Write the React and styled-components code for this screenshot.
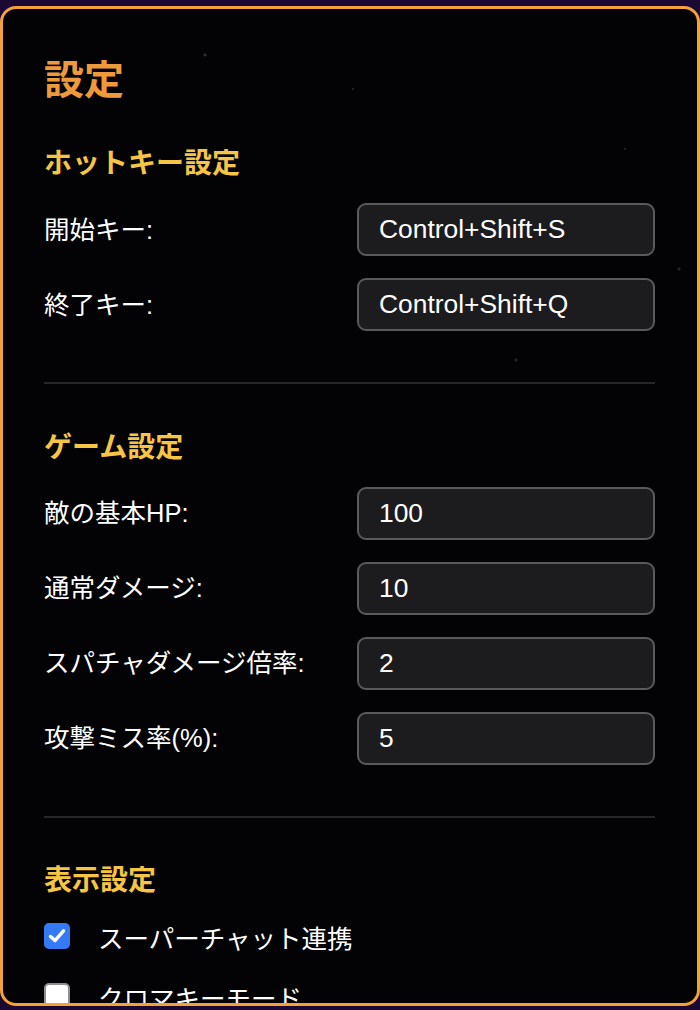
import React from "react";
import styled, { createGlobalStyle } from "styled-components";

const GlobalStyle = createGlobalStyle`
  html, body {
    margin: 0;
    padding: 0;
    background: #1b0833;
  }
  body {
    font-family: "Liberation Sans", "Noto Sans CJK JP", sans-serif;
    color: #fff;
  }
  * { box-sizing: border-box; }
`;

const Page = styled.div`
  padding-top: 6px;
  width: 700px;
`;

const Panel = styled.div`
  width: 700px;
  height: 1000px;
  border: 3px solid #f3a23b;
  border-radius: 16px;
  overflow: hidden;
  background-color: #030305;
  background-image:
    radial-gradient(circle at 202px 46px, #2c2c34 0 1.3px, transparent 1.8px),
    radial-gradient(circle at 350px 80px, #202026 0 1px, transparent 1.5px),
    radial-gradient(circle at 676px 260px, #26262c 0 1.3px, transparent 1.8px),
    radial-gradient(circle at 513px 351px, #26262c 0 1.3px, transparent 1.8px),
    radial-gradient(circle at 622px 140px, #1c1c22 0 1px, transparent 1.5px);
  padding: 46.5px 42px 0 41px;
`;

const Title = styled.h2`
  margin: 0 0 43.5px;
  font-size: 40px;
  line-height: 48px;
  font-weight: 700;
  color: #ee9a3c;
`;

const SectionTitle = styled.h3`
  margin: 0 0 22px;
  font-size: 28px;
  line-height: 34px;
  font-weight: 700;
  color: #f5c543;
`;

const FieldList = styled.div`
  display: flex;
  flex-direction: column;
  gap: 22px;
`;

const Field = styled.label`
  display: flex;
  align-items: center;
  justify-content: space-between;
  height: 53px;
`;

const Label = styled.span`
  font-size: 25.5px;
  line-height: 32px;
  color: #fff;
`;

const Input = styled.input`
  width: 298px;
  height: 53px;
  padding: 0 20px;
  border: 2px solid #5a5a5e;
  border-radius: 9px;
  background: #1c1c1f;
  color: #fff;
  font-family: "Liberation Sans", "Noto Sans CJK JP", sans-serif;
  font-size: 26.4px;
  outline: none;
`;

const Divider = styled.hr`
  border: none;
  height: 2px;
  background: #26262a;
  margin: 51px 0 46.5px;
`;

const CheckList = styled.div`
  display: flex;
  flex-direction: column;
  gap: 28px;
`;

const CheckRow = styled.label`
  display: flex;
  align-items: center;
  height: 32px;
`;

const Box = styled.span`
  flex: 0 0 auto;
  width: 26px;
  height: 26px;
  border-radius: 5px;
  display: flex;
  align-items: center;
  justify-content: center;
  margin-right: 28px;
  background: ${(p) => (p.$checked ? "#3479f6" : "#ffffff")};
  border: ${(p) => (p.$checked ? "none" : "2px solid #8d8d92")};
`;

const CheckText = styled.span`
  font-size: 25.5px;
  line-height: 32px;
  padding-top: 6px;
  color: #fff;
`;

const Checkbox = ({ checked, children }) => (
  <CheckRow>
    <Box $checked={checked}>
      {checked && (
        <svg width="20" height="20" viewBox="0 0 20 20" fill="none">
          <path
            d="M3.5 10.5 L8 14.6 L16.5 4.8"
            stroke="#fff"
            strokeWidth="3.4"
            strokeLinecap="round"
            strokeLinejoin="round"
          />
        </svg>
      )}
    </Box>
    <CheckText>{children}</CheckText>
  </CheckRow>
);

const hotkeys = [
  { label: "開始キー:", value: "Control+Shift+S" },
  { label: "終了キー:", value: "Control+Shift+Q" },
];

const game = [
  { label: "敵の基本HP:", value: "100" },
  { label: "通常ダメージ:", value: "10" },
  { label: "スパチャダメージ倍率:", value: "2" },
  { label: "攻撃ミス率(%):", value: "5" },
];

const Fields = ({ items }) => (
  <FieldList>
    {items.map((it) => (
      <Field key={it.label}>
        <Label>{it.label}</Label>
        <Input defaultValue={it.value} />
      </Field>
    ))}
  </FieldList>
);

export default function App() {
  return (
    <Page>
      <GlobalStyle />
      <Panel>
        <Title>設定</Title>
        <section>
          <SectionTitle>ホットキー設定</SectionTitle>
          <Fields items={hotkeys} />
        </section>
        <Divider />
        <section>
          <SectionTitle>ゲーム設定</SectionTitle>
          <Fields items={game} />
        </section>
        <Divider />
        <section>
          <SectionTitle>表示設定</SectionTitle>
          <CheckList>
            <Checkbox checked>スーパーチャット連携</Checkbox>
            <Checkbox>クロマキーモード</Checkbox>
            <Checkbox>エフェクト表示</Checkbox>
          </CheckList>
        </section>
      </Panel>
    </Page>
  );
}
